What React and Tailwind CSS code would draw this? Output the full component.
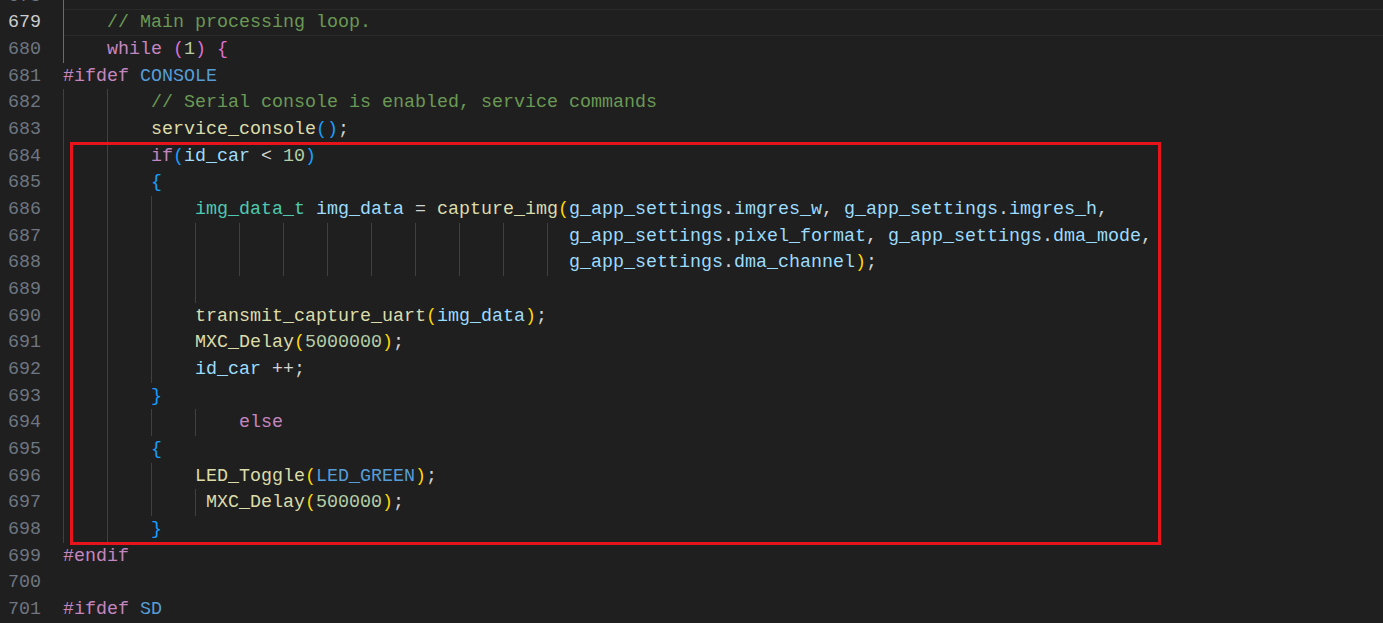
import React from 'react';

// token colour classes (VS Code Dark Modern)
const tk = {
  cm: 'text-[#6a9955]',
  kw: 'text-[#c586c0]',
  mac: 'text-[#569cd6]',
  num: 'text-[#b5cea8]',
  fn: 'text-[#dcdcaa]',
  ty: 'text-[#4ec9b0]',
  v: 'text-[#9cdcfe]',
  p: 'text-[#d4d4d4]',
  b1: 'text-[#ffd700]',
  b2: 'text-[#da70d6]',
  b3: 'text-[#179fff]',
};

const sp = (n) => ' '.repeat(n);

const lines = [
  { n: 678, g: 1, act: true, t: [] },
  { n: 679, g: 1, act: true, cur: true, t: [['p', sp(4)], ['cm', '// Main processing loop.']] },
  { n: 680, g: 1, act: true, t: [['p', sp(4)], ['kw', 'while'], ['p', ' '], ['b2', '('], ['num', '1'], ['b2', ')'], ['p', ' '], ['b2', '{']] },
  { n: 681, g: 0, t: [['kw', '#ifdef'], ['p', ' '], ['mac', 'CONSOLE']] },
  { n: 682, g: 2, t: [['p', sp(8)], ['cm', '// Serial console is enabled, service commands']] },
  { n: 683, g: 2, t: [['p', sp(8)], ['fn', 'service_console'], ['b3', '()'], ['p', ';']] },
  { n: 684, g: 2, t: [['p', sp(8)], ['kw', 'if'], ['b3', '('], ['v', 'id_car'], ['p', ' < '], ['num', '10'], ['b3', ')']] },
  { n: 685, g: 2, t: [['p', sp(8)], ['b3', '{']] },
  {
    n: 686, g: 3, t: [
      ['p', sp(12)], ['ty', 'img_data_t'], ['p', ' '], ['v', 'img_data'], ['p', ' = '], ['fn', 'capture_img'], ['b1', '('],
      ['v', 'g_app_settings'], ['p', '.'], ['v', 'imgres_w'], ['p', ', '], ['v', 'g_app_settings'], ['p', '.'], ['v', 'imgres_h'], ['p', ','],
    ],
  },
  {
    n: 687, g: 12, t: [
      ['p', sp(46)], ['v', 'g_app_settings'], ['p', '.'], ['v', 'pixel_format'], ['p', ', '], ['v', 'g_app_settings'], ['p', '.'], ['v', 'dma_mode'], ['p', ','],
    ],
  },
  { n: 688, g: 12, t: [['p', sp(46)], ['v', 'g_app_settings'], ['p', '.'], ['v', 'dma_channel'], ['b1', ')'], ['p', ';']] },
  { n: 689, g: 4, t: [] },
  { n: 690, g: 3, t: [['p', sp(12)], ['fn', 'transmit_capture_uart'], ['b1', '('], ['v', 'img_data'], ['b1', ')'], ['p', ';']] },
  { n: 691, g: 3, t: [['p', sp(12)], ['fn', 'MXC_Delay'], ['b1', '('], ['num', '5000000'], ['b1', ')'], ['p', ';']] },
  { n: 692, g: 3, t: [['p', sp(12)], ['v', 'id_car'], ['p', ' ++;']] },
  { n: 693, g: 2, t: [['p', sp(8)], ['b3', '}']] },
  { n: 694, g: 4, t: [['p', sp(16)], ['kw', 'else']] },
  { n: 695, g: 2, t: [['p', sp(8)], ['b3', '{']] },
  { n: 696, g: 3, t: [['p', sp(12)], ['fn', 'LED_Toggle'], ['b1', '('], ['mac', 'LED_GREEN'], ['b1', ')'], ['p', ';']] },
  { n: 697, g: 4, t: [['p', sp(13)], ['fn', 'MXC_Delay'], ['b1', '('], ['num', '500000'], ['b1', ')'], ['p', ';']] },
  { n: 698, g: 2, t: [['p', sp(8)], ['b3', '}']] },
  { n: 699, g: 0, t: [['kw', '#endif']] },
  { n: 700, g: 0, t: [] },
  { n: 701, g: 0, t: [['kw', '#ifdef'], ['p', ' '], ['mac', 'SD']] },
  { n: 702, g: 2, t: [] },
];

const Line = ({ line }) => (
  <div className="flex h-[26.68px] leading-[26.68px]">
    <div className="w-[63px] shrink-0">
      <div className={`w-[41px] translate-y-[1px] text-right ${line.cur ? 'text-[#cccccc]' : 'text-[#6e7681]'}`}>{line.n}</div>
    </div>
    <div className="relative flex-1 whitespace-pre">
      {line.cur && <div className="absolute inset-0 border-y border-[#2a2a2a]" />}
      <div className="absolute inset-y-0 left-0 flex">
        {Array.from({ length: line.g }).map((_, i) => (
          <div
            key={i}
            className={`w-[44px] border-l ${line.act && i === 0 ? 'border-[#6b6b6b]' : 'border-[#404040]'}`}
          />
        ))}
      </div>
      <span className="relative top-[1px]">
        {line.t.map(([k, s], i) => (
          <span key={i} className={tk[k]}>{s}</span>
        ))}
      </span>
    </div>
  </div>
);

export default function App() {
  return (
    <div className="relative h-[623px] w-full overflow-hidden bg-[#1f1f1f] font-['Liberation_Mono',monospace] text-[18.33px]">
      <div className="-mt-[17.5px]">
        {lines.map((l) => (
          <Line key={l.n} line={l} />
        ))}
      </div>
      {/* highlight box drawn over the code */}
      <div className="absolute left-[70px] top-[142px] h-[403px] w-[1091px] border-[3px] border-[#e8141c]" />
    </div>
  );
}
